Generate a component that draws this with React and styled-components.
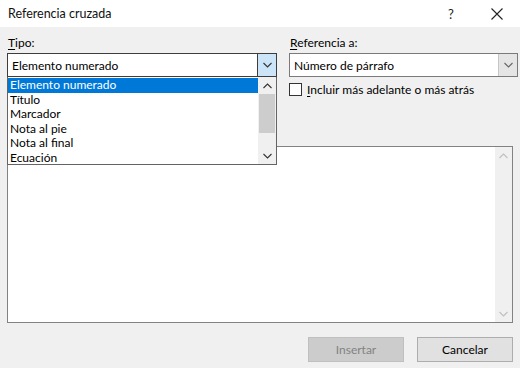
import styled, { createGlobalStyle } from "styled-components";

const GlobalStyle = createGlobalStyle`
  html, body {
    margin: 0;
    padding: 0;
    background: #f0f0f0;
  }
  body {
    font-family: Lato, "Noto Sans", sans-serif;
    font-size: 12px;
    color: #000;
  }
`;

const Window = styled.div`
  width: 520px;
  height: 368px;
  display: flex;
  flex-direction: column;
  background: #f0f0f0;
  overflow: hidden;
`;

const TitleBar = styled.div`
  height: 27px;
  flex: none;
  display: flex;
  align-items: center;
  background: #fff;
  padding-left: 8px;
`;

const Title = styled.div`
  flex: 1;
  font-size: 12.5px;
  color: #111;
`;

const TitleButton = styled.div`
  width: 46px;
  height: 27px;
  display: flex;
  align-items: center;
  justify-content: center;
  font-size: 13px;
  color: #222;
`;

const Body = styled.div`
  flex: 1;
  display: flex;
  flex-direction: column;
  padding: 9px 2px 0 7px;
`;

const TopArea = styled.div`
  height: 110px;
  display: flex;
  gap: 12px;
`;

const Column = styled.div`
  width: ${(p) => p.$w}px;
  flex: none;
  display: flex;
  flex-direction: column;
  position: relative;
`;

const Label = styled.div`
  height: 17px;
  line-height: 14px;
  padding-left: 1px;
  u {
    text-decoration-thickness: 1px;
    text-underline-offset: 2px;
  }
`;

const Combo = styled.div`
  height: 24px;
  box-sizing: border-box;
  display: flex;
  background: #fff;
  border: 1px solid ${(p) => (p.$focused ? "#3d3d3d" : "#7a7a7a")};
`;

const ComboText = styled.div`
  flex: 1;
  display: flex;
  align-items: center;
  padding-left: 4px;
`;

const ComboArrow = styled.div`
  width: 18px;
  display: flex;
  align-items: center;
  justify-content: center;
  background: ${(p) => (p.$focused ? "#cce4f7" : "#e5e5e5")};
  border-left: 1px solid ${(p) => (p.$focused ? "#3d3d3d" : "#c6c6c6")};
`;

const DropList = styled.div`
  position: absolute;
  top: 41px;
  left: 0;
  right: 0;
  height: 88px;
  box-sizing: border-box;
  border: 1px solid #646464;
  border-top: none;
  background: #fff;
  display: flex;
  z-index: 2;
`;

const Items = styled.div`
  flex: 1;
  padding-top: 1px;
`;

const Item = styled.div`
  height: 14.6px;
  line-height: 14.6px;
  padding-left: 2px;
  background: ${(p) => (p.$selected ? "#0078d7" : "transparent")};
  color: ${(p) => (p.$selected ? "#fff" : "#000")};
`;

const ScrollBar = styled.div`
  width: 18px;
  display: flex;
  flex-direction: column;
  background: #f0f0f0;
`;

const ScrollBtn = styled.div`
  height: 17px;
  display: flex;
  align-items: center;
  justify-content: center;
  flex: none;
`;

const ScrollTrack = styled.div`
  flex: 1;
  display: flex;
  flex-direction: column;
`;

const Thumb = styled.div`
  margin: 0 1px;
  height: 39px;
  background: #cdcdcd;
`;

const CheckRow = styled.div`
  margin-top: 5px;
  display: flex;
  align-items: center;
  gap: 5px;
  u {
    text-decoration-thickness: 1px;
    text-underline-offset: 2px;
  }
`;

const CheckBox = styled.div`
  width: 13px;
  height: 13px;
  box-sizing: border-box;
  border: 1px solid #333;
  background: #fff;
`;

const ListBox = styled.div`
  width: 506px;
  height: 177px;
  box-sizing: border-box;
  border: 1px solid #828282;
  background: #fff;
  display: flex;
  justify-content: flex-end;
`;

const ListScroll = styled(ScrollBar)`
  justify-content: space-between;
  width: 17px;
`;

const Buttons = styled.div`
  margin-top: 14px;
  display: flex;
  justify-content: flex-end;
  gap: 13px;
  width: 506px;
`;

const Button = styled.div`
  width: 96px;
  height: 25px;
  box-sizing: border-box;
  display: flex;
  align-items: center;
  justify-content: center;
  border: 1px solid ${(p) => (p.$disabled ? "#bfbfbf" : "#adadad")};
  background: ${(p) => (p.$disabled ? "#cccccc" : "#e1e1e1")};
  color: ${(p) => (p.$disabled ? "#838383" : "#000")};
`;

const Chevron = ({ up, color = "#333" }) => (
  <svg width="9" height="6" viewBox="0 0 9 6">
    <polyline
      points={up ? "0.5,5 4.5,1 8.5,5" : "0.5,1 4.5,5 8.5,1"}
      fill="none"
      stroke={color}
      strokeWidth="1.1"
    />
  </svg>
);

const CloseIcon = () => (
  <svg width="12" height="12" viewBox="0 0 12 12">
    <path d="M0.5 0.5 L11.5 11.5 M11.5 0.5 L0.5 11.5" stroke="#222" strokeWidth="1.1" />
  </svg>
);

const items = [
  "Elemento numerado",
  "Título",
  "Marcador",
  "Nota al pie",
  "Nota al final",
  "Ecuación",
];

export default function App() {
  return (
    <Window>
      <GlobalStyle />
      <TitleBar>
        <Title>Referencia cruzada</Title>
        <TitleButton>?</TitleButton>
        <TitleButton>
          <CloseIcon />
        </TitleButton>
      </TitleBar>
      <Body>
        <TopArea>
          <Column $w={270}>
            <Label>
              <u>T</u>ipo:
            </Label>
            <Combo $focused>
              <ComboText>Elemento numerado</ComboText>
              <ComboArrow $focused>
                <Chevron />
              </ComboArrow>
            </Combo>
            <DropList>
              <Items>
                {items.map((t, i) => (
                  <Item key={t} $selected={i === 0}>
                    {t}
                  </Item>
                ))}
              </Items>
              <ScrollBar>
                <ScrollBtn>
                  <Chevron up />
                </ScrollBtn>
                <ScrollTrack>
                  <Thumb />
                </ScrollTrack>
                <ScrollBtn>
                  <Chevron />
                </ScrollBtn>
              </ScrollBar>
            </DropList>
          </Column>
          <Column $w={229}>
            <Label>
              <u>R</u>eferencia a:
            </Label>
            <Combo>
              <ComboText>Número de párrafo</ComboText>
              <ComboArrow>
                <Chevron color="#666" />
              </ComboArrow>
            </Combo>
            <CheckRow>
              <CheckBox />
              <span>
                <u>I</u>ncluir más adelante o más atrás
              </span>
            </CheckRow>
          </Column>
        </TopArea>
        <ListBox>
          <ListScroll>
            <ScrollBtn>
              <Chevron up color="#bfbfbf" />
            </ScrollBtn>
            <ScrollBtn>
              <Chevron color="#bfbfbf" />
            </ScrollBtn>
          </ListScroll>
        </ListBox>
        <Buttons>
          <Button $disabled>Insertar</Button>
          <Button>Cancelar</Button>
        </Buttons>
      </Body>
    </Window>
  );
}
